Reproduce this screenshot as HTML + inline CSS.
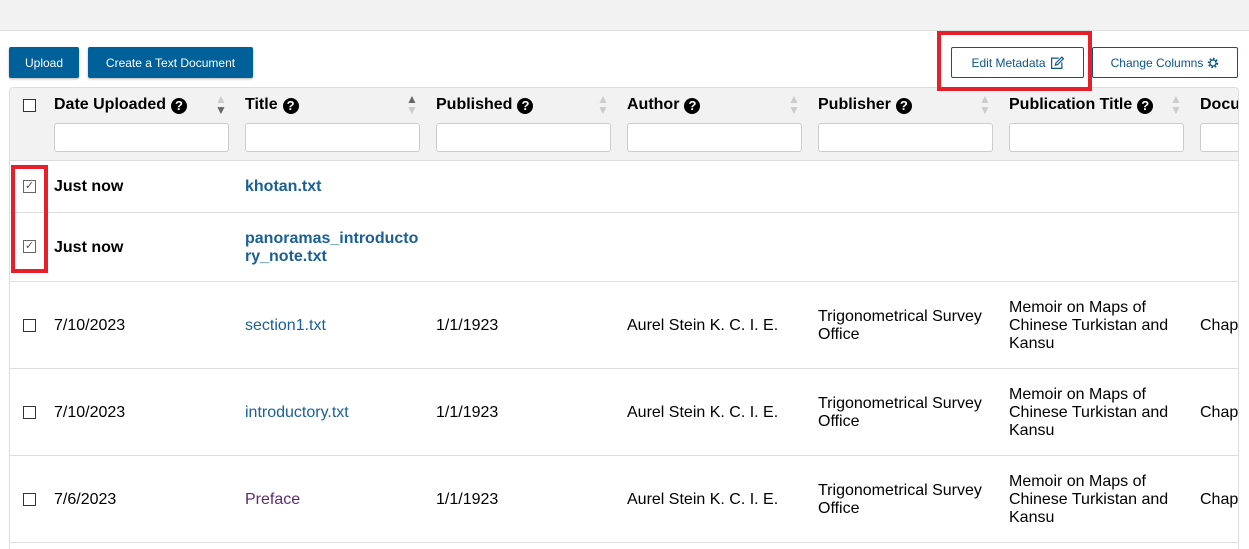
<!DOCTYPE html><html><head><style>
*{box-sizing:border-box;margin:0;padding:0}
body{width:1249px;height:549px;overflow:hidden;background:#fff;font-family:"Liberation Sans",Arial,sans-serif;position:relative;color:#000}
.a{position:absolute}
.top{left:0;top:0;width:1249px;height:31px;background:#f2f2f2;border-bottom:1px solid #ddd}
.btn{position:absolute;top:47px;height:31px;background:#00609a;color:#fff;font-size:12px;display:flex;align-items:center;justify-content:center;border-radius:2px;box-shadow:0 1px 2px rgba(0,0,0,.3)}
.obtn{position:absolute;top:47px;height:31px;background:#fff;color:#0b5588;border:1px solid #0b5588;font-size:12px;display:flex;align-items:center;justify-content:center;border-radius:2px;gap:4px}
.tbl{left:9px;top:87px;width:1230px;height:462px;border-left:1px solid #ddd;border-top:1px solid #ddd;border-right:1px solid #ddd;border-radius:4px 4px 0 0;overflow:hidden}
.hdr{left:0;top:0;width:1240px;height:73px;background:#f2f2f2;border-bottom:1px solid #ddd}
.h{position:absolute;top:8px;font-weight:bold;font-size:16px;white-space:nowrap}
.q{display:inline-block;width:16px;height:16px;border-radius:50%;background:#000;color:#fff;font-size:13px;text-align:center;line-height:16px;vertical-align:-1px;margin-left:5px}
.inp{position:absolute;top:35px;width:175px;height:29px;background:#fff;border:1px solid #ccc;border-radius:3px}
.s{position:absolute;top:6px;font-size:12px;line-height:11px;color:#ccc}
.row{position:absolute;left:0;width:1240px;border-bottom:1px solid #ddd}
.c{position:absolute;font-size:16px;line-height:18px}
.cb{position:absolute;left:13px;width:13px;height:13px;border:1px solid #333;background:#fff}
.lk{color:#1a5f96}
.red{position:absolute;border:4px solid #e5202a;z-index:5}
</style></head><body>
<div class="a top"></div>
<div class="btn" style="left:9px;width:70px">Upload</div>
<div class="btn" style="left:88px;width:165px">Create a Text Document</div>
<div class="obtn" style="left:951px;width:133px">Edit Metadata <svg width="14" height="14" viewBox="0 0 13 13" fill="none" stroke="#0b5588" stroke-width="1.1"><path d="M8 2H1.5v9.5H11V6"/><path d="M5 8.5l.5-2L11 1l1.5 1.5L7 8z"/></svg></div>
<div class="obtn" style="left:1092px;width:146px">Change Columns <svg width="12" height="12" viewBox="0 0 12 12"><circle cx="6" cy="6" r="4" fill="none" stroke="#0b5588" stroke-width="2.4" stroke-dasharray="1.6 1.5"/><circle cx="6" cy="6" r="3" fill="none" stroke="#0b5588" stroke-width="1.2"/></svg></div>
<div class="red" style="left:937px;top:31px;width:155px;height:60px"></div>
<div class="a tbl">
<div class="a hdr">
<div class="cb" style="top:11px"></div>
<div class="h" style="left:44px">Date Uploaded<span class="q">?</span></div><div class="s" style="left:205px">▲<br><span style="color:#666">▼</span></div>
<div class="h" style="left:235px">Title<span class="q">?</span></div><div class="s" style="left:396px"><span style="color:#666">▲</span><br>▼</div>
<div class="h" style="left:426px">Published<span class="q">?</span></div><div class="s" style="left:587px">▲<br>▼</div>
<div class="h" style="left:617px">Author<span class="q">?</span></div><div class="s" style="left:778px">▲<br>▼</div>
<div class="h" style="left:808px">Publisher<span class="q">?</span></div><div class="s" style="left:969px">▲<br>▼</div>
<div class="h" style="left:999px">Publication Title<span class="q">?</span></div><div class="s" style="left:1160px">▲<br>▼</div>
<div class="h" style="left:1190px">Document</div>
<div class="inp" style="left:44px"></div><div class="inp" style="left:235px"></div><div class="inp" style="left:426px"></div><div class="inp" style="left:617px"></div><div class="inp" style="left:808px"></div><div class="inp" style="left:999px"></div><div class="inp" style="left:1190px"></div>
</div>
<div class="row" style="top:73px;height:52px"><div class="cb" style="top:19px;border-color:#666;font-size:11px;line-height:11px;text-align:center;color:#555">✓</div><div class="c" style="left:44px;top:17px;font-weight:bold">Just now</div><div class="c lk" style="left:235px;top:17px;font-weight:bold">khotan.txt</div></div>
<div class="row" style="top:125px;height:69px"><div class="cb" style="top:27px;border-color:#666;font-size:11px;line-height:11px;text-align:center;color:#555">✓</div><div class="c" style="left:44px;top:26px;font-weight:bold">Just now</div><div class="c lk" style="left:235px;top:17px;font-weight:bold">panoramas_introducto<br>ry_note.txt</div></div>
<div class="row" style="top:194px;height:87px"><div class="cb" style="top:37px"></div><div class="c" style="left:44px;top:35px">7/10/2023</div><div class="c lk" style="left:235px;top:35px">section1.txt</div><div class="c" style="left:426px;top:35px">1/1/1923</div><div class="c" style="left:617px;top:35px">Aurel Stein K. C. I. E.</div><div class="c" style="left:808px;top:26px">Trigonometrical Survey<br>Office</div><div class="c" style="left:999px;top:17px">Memoir on Maps of<br>Chinese Turkistan and<br>Kansu</div><div class="c" style="left:1190px;top:35px">Chapter</div></div>
<div class="row" style="top:281px;height:87px"><div class="cb" style="top:37px"></div><div class="c" style="left:44px;top:35px">7/10/2023</div><div class="c lk" style="left:235px;top:35px">introductory.txt</div><div class="c" style="left:426px;top:35px">1/1/1923</div><div class="c" style="left:617px;top:35px">Aurel Stein K. C. I. E.</div><div class="c" style="left:808px;top:26px">Trigonometrical Survey<br>Office</div><div class="c" style="left:999px;top:17px">Memoir on Maps of<br>Chinese Turkistan and<br>Kansu</div><div class="c" style="left:1190px;top:35px">Chapter</div></div>
<div class="row" style="top:368px;height:87px"><div class="cb" style="top:37px"></div><div class="c" style="left:44px;top:35px">7/6/2023</div><div class="c" style="left:235px;top:35px;color:#5e2a6e">Preface</div><div class="c" style="left:426px;top:35px">1/1/1923</div><div class="c" style="left:617px;top:35px">Aurel Stein K. C. I. E.</div><div class="c" style="left:808px;top:26px">Trigonometrical Survey<br>Office</div><div class="c" style="left:999px;top:17px">Memoir on Maps of<br>Chinese Turkistan and<br>Kansu</div><div class="c" style="left:1190px;top:35px">Chapter</div></div>
</div>
<div class="red" style="left:11px;top:165px;width:37px;height:108px"></div>
</body></html>
